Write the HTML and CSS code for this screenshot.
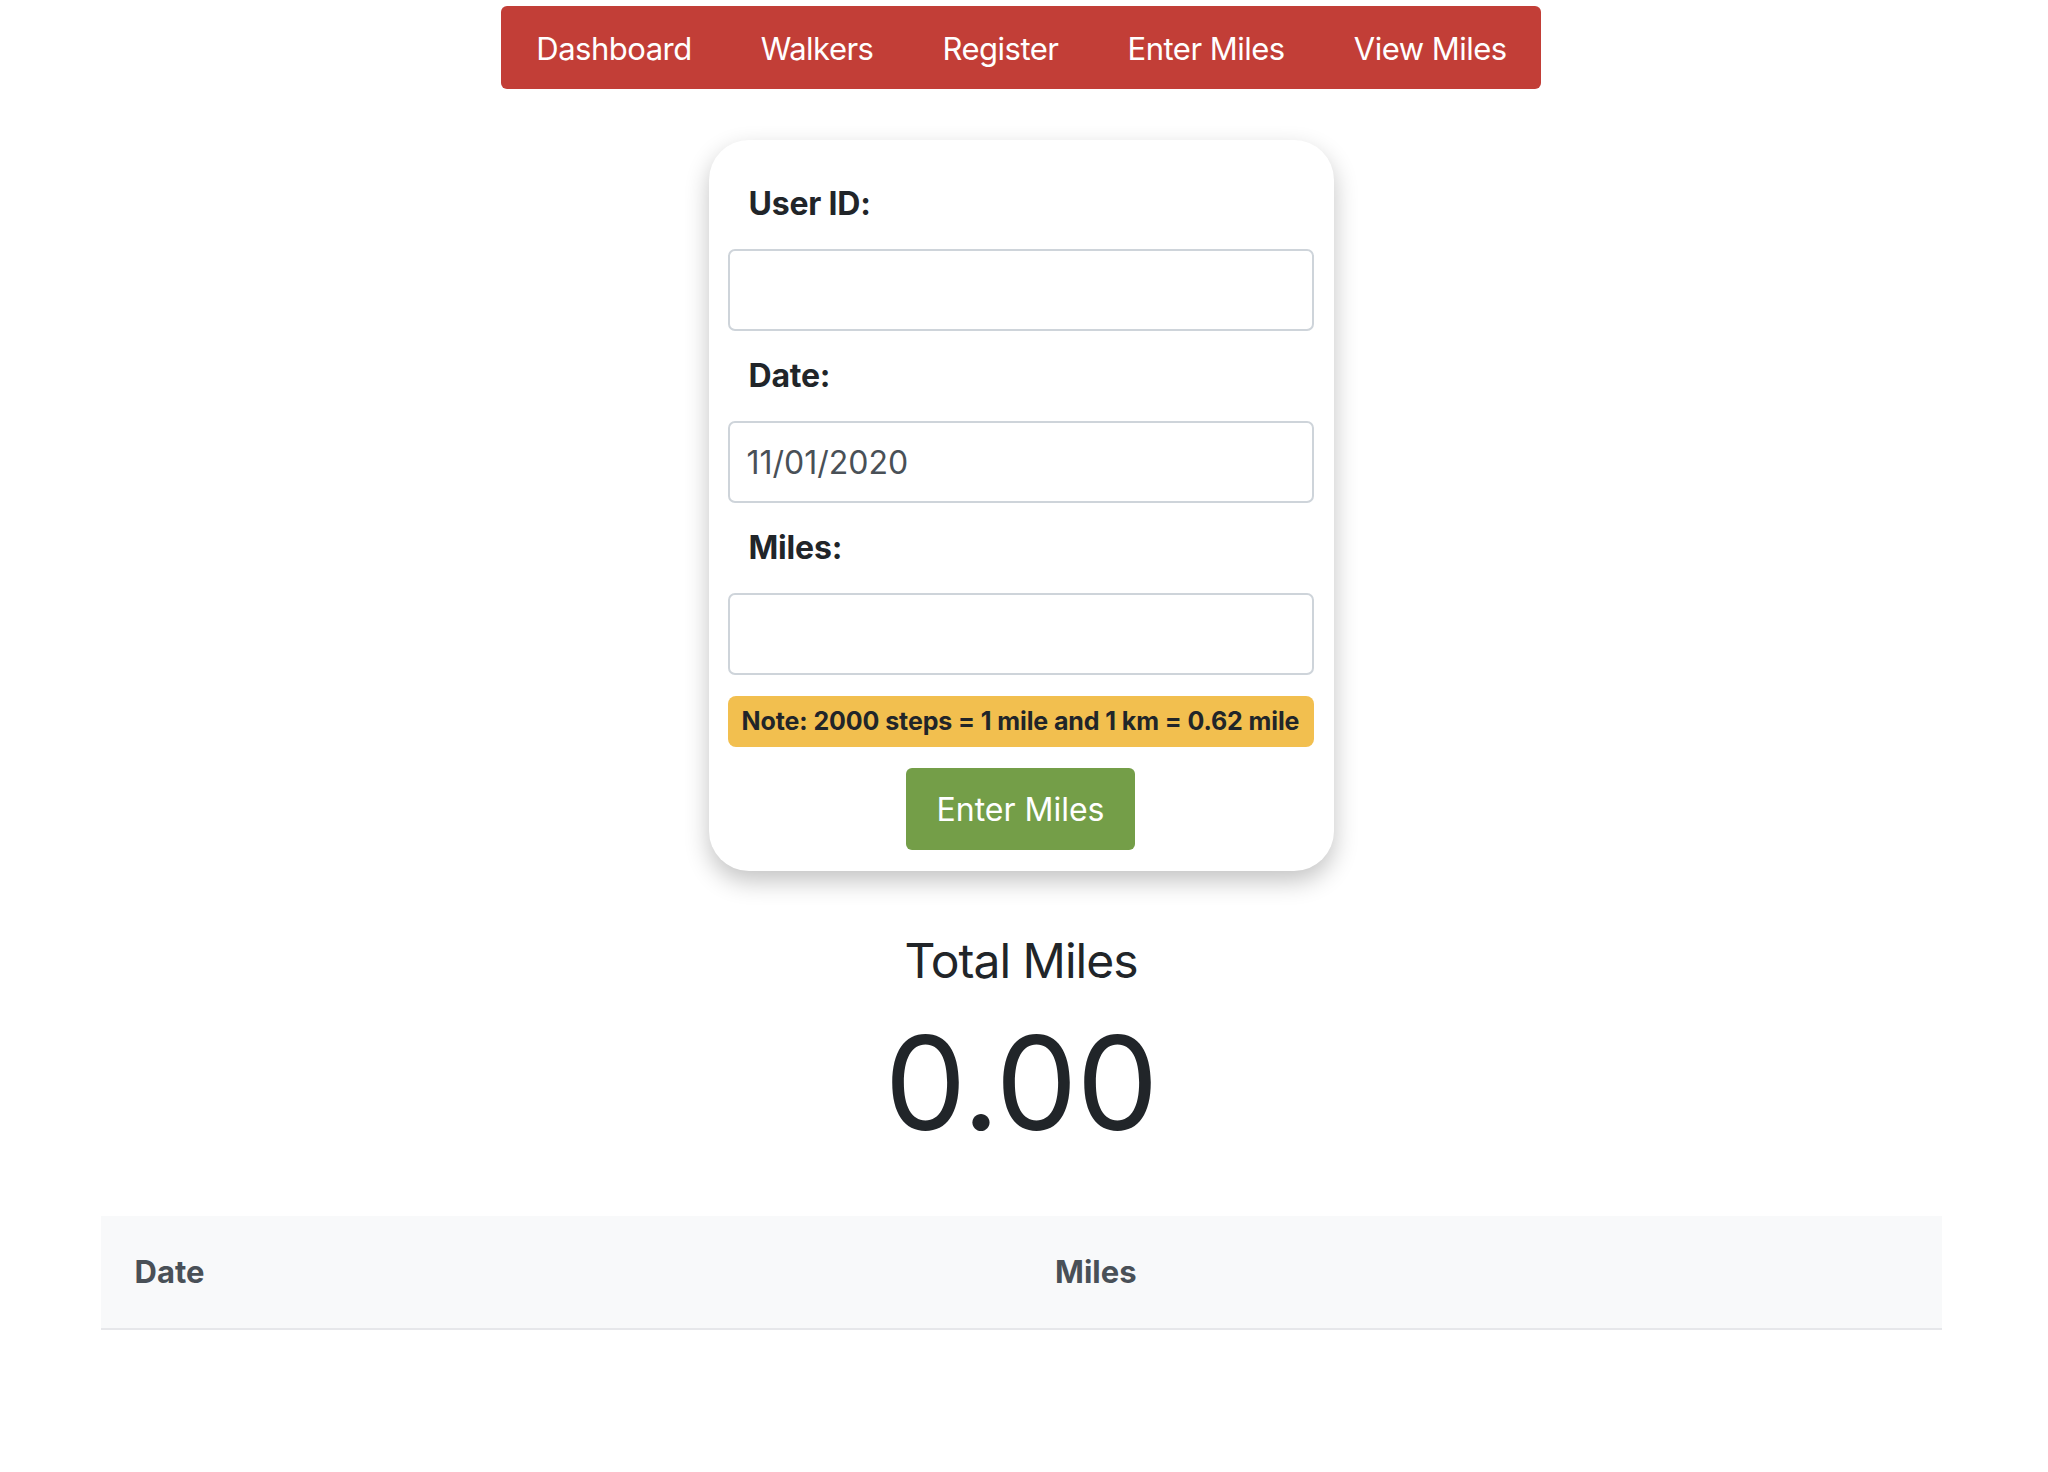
FILE: index.html
```html
<!DOCTYPE html>
<html lang="en">
<head>
<meta charset="utf-8">
<title>Enter Miles</title>
<link rel="stylesheet" href="styles.css">
</head>
<body>
<div class="page">
  <nav class="topnav">
    <a class="nav-link" href="#">Dashboard</a>
    <a class="nav-link" href="#">Walkers</a>
    <a class="nav-link" href="#">Register</a>
    <a class="nav-link" href="#">Enter Miles</a>
    <a class="nav-link" href="#">View Miles</a>
  </nav>

  <form class="card">
    <label class="field-label" for="uid">User ID:</label>
    <input class="field-input" id="uid" type="text">
    <label class="field-label" for="date">Date:</label>
    <input class="field-input" id="date" type="text" value="11/01/2020">
    <label class="field-label" for="miles">Miles:</label>
    <input class="field-input" id="miles" type="text">
    <div class="note">Note: 2000 steps = 1 mile and 1 km = 0.62 mile</div>
    <button class="submit" type="button">Enter Miles</button>
  </form>

  <section class="total">
    <h3 class="total-title">Total Miles</h3>
    <div class="total-value">0.00</div>
  </section>

  <table class="miles-table">
    <thead>
      <tr><th>Date</th><th>Miles</th></tr>
    </thead>
    <tbody></tbody>
  </table>
</div>
</body>
</html>
```

FILE: styles.css
```css
* { box-sizing: border-box; }
html, body { margin: 0; padding: 0; background: #fff; }
body {
  font-family: Inter, "Noto Sans", "Liberation Sans", sans-serif;
  color: #212529;
}
.page {
  padding: 6px 6px 0 0;
  display: flex;
  flex-direction: column;
  align-items: center;
}
.topnav {
  display: flex;
  background: #c23e37;
  border-radius: 6px;
  height: 83px;
  align-items: center;
  padding: 2px 0 0;
}
.nav-link {
  color: #fff;
  text-decoration: none;
  font-size: 31px;
  padding: 0 34px 0 35px;
  line-height: 48px;
  letter-spacing: -0.5px;
}
.card {
  margin-top: 51px;
  width: 625px;
  background: #fff;
  border-radius: 40px;
  box-shadow: 0 10px 24px rgba(0,0,0,0.24);
  padding: 19px 20px 21px 19px;
  display: flex;
  flex-direction: column;
}
.field-label {
  font-size: 32px;
  font-weight: 700;
  line-height: 48px;
  padding: 21px 21px 21px 21px;
  letter-spacing: -0.2px;
}
.field-input {
  height: 82px;
  border: 2px solid #ced4da;
  border-radius: 7px;
  font-family: inherit;
  font-size: 32px;
  color: #495057;
  padding: 0 17px;
  outline: none;
  background: #fff;
}
.note {
  margin-top: 21px;
  background: #f2bf4f;
  border-radius: 8px;
  height: 51px;
  line-height: 51px;
  font-size: 25px;
  font-weight: 700;
  text-align: center;
  color: #212529;
  letter-spacing: -0.1px;
}
.submit {
  margin: 21px auto 0;
  width: 229px;
  height: 82px;
  background: #749e48;
  border: none;
  border-radius: 6px;
  color: #fff;
  font-family: inherit;
  font-size: 32px;
}
.total {
  margin-top: 61px;
  text-align: center;
}
.total-title {
  margin: 0;
  font-size: 48px;
  font-weight: 400;
  line-height: 58px;
  letter-spacing: -1px;
}
.total-value {
  margin-top: 28px;
  font-size: 130px;
  line-height: 130px;
  font-weight: 400;
  letter-spacing: -1px;
}
.miles-table {
  margin-top: 68px;
  width: 1841px;
  border-collapse: collapse;
  table-layout: fixed;
}
.miles-table th {
  background: #f8f9fa;
  color: #495057;
  font-size: 31px;
  font-weight: 700;
  text-align: left;
  padding: 32px 34px;
  line-height: 48px;
  border-bottom: 2px solid #e6e7ea;
}
```
